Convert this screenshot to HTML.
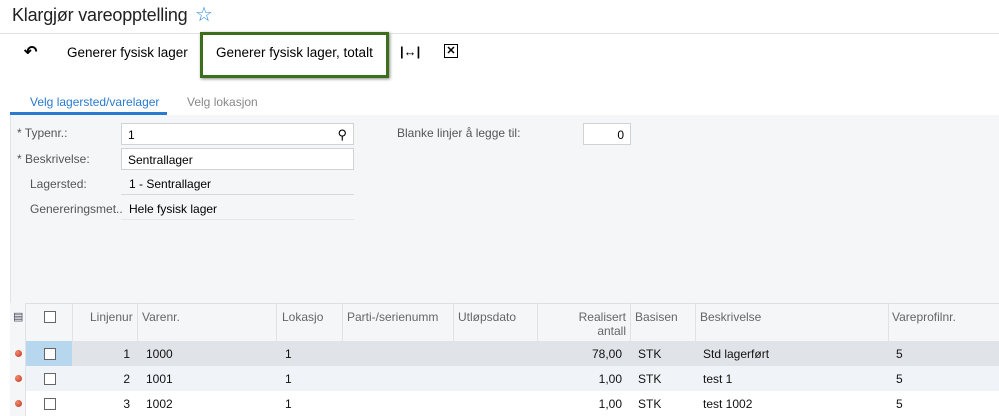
<html><head><style>
body{margin:0;width:999px;height:416px;overflow:hidden;background:#fff;font-family:"Liberation Sans",Arial,sans-serif;position:relative}
div,span{position:absolute}
.t{font-size:13px;color:#000}
.lbl{font-size:12px;color:#555}
.inp{background:#fff;border:1px solid #cfd3d8;height:22px;font-size:12px;line-height:22px;padding-left:6px;box-sizing:border-box}
.h{font-size:12px;color:#666;top:310px;overflow:hidden;white-space:nowrap}
.vl{top:303px;height:38px;width:1px;background:#e0e2e5}
.cell{font-size:12px;color:#111}
.cb{width:10px;height:10px;border:1px solid #666;background:#fff}
.dot{width:7px;height:7px;border-radius:50%;background:radial-gradient(circle at 35% 35%,#f08a70,#c0321a)}
</style></head><body>
<div style="left:12px;top:5px;font-size:18px;color:#222;letter-spacing:-0.2px">Klargjør vareopptelling</div>
<div style="left:195px;top:2px;font-size:20px;color:#2a8ad8">☆</div>
<div style="left:0;top:33px;width:999px;height:1px;background:#e2e2e2"></div>
<div style="left:24px;top:42px;font-size:16px;font-weight:bold">↶</div>
<div class="t" style="left:67px;top:45px;font-size:13.5px">Generer fysisk lager</div>
<div style="left:200px;top:32px;width:183px;height:40px;border:3px solid #3d6e1b;box-shadow:1px 1px 3px #888"></div>
<div class="t" style="left:216px;top:45px;font-size:13.5px">Generer fysisk lager, totalt</div>
<div style="left:400px;top:44px;font-size:13px;font-weight:bold">|↔|</div>
<div style="left:444px;top:44px;width:12px;height:12px;border:1px solid #000;font-size:11px;line-height:12px;text-align:center;font-weight:bold">✕</div>
<div style="left:30px;top:95px;font-size:12px;color:#2a7ad0">Velg lagersted/varelager</div>
<div style="left:187px;top:95px;font-size:12px;color:#888">Velg lokasjon</div>
<div style="left:10px;top:112px;width:157px;height:3px;background:#2a7ad0"></div>
<div style="left:10px;top:115px;width:989px;height:188px;background:#f5f6f8;border-left:1px solid #e0e2e5"></div>
<div class="lbl" style="left:17px;top:126px">* Typenr.:</div>
<div class="inp" style="left:121px;top:123px;width:233px">1<span style="right:6px;top:0;font-size:13px">⚲</span></div>
<div class="lbl" style="left:17px;top:152px">* Beskrivelse:</div>
<div class="inp" style="left:121px;top:148px;width:233px">Sentrallager</div>
<div class="lbl" style="left:30px;top:177px">Lagersted:</div>
<div class="t" style="left:129px;top:177px;font-size:12px">1 - Sentrallager</div>
<div style="left:121px;top:194px;width:233px;height:1px;background:#d5d8dc"></div>
<div class="lbl" style="left:30px;top:202px;width:92px;overflow:hidden;white-space:nowrap">Genereringsmet...</div>
<div class="t" style="left:129px;top:202px;font-size:12px">Hele fysisk lager</div>
<div style="left:121px;top:219px;width:233px;height:1px;background:#e5e7ea"></div>
<div class="lbl" style="left:397px;top:126px">Blanke linjer å legge til:</div>
<div class="inp" style="left:583px;top:123px;width:48px;text-align:right;padding-right:6px">0</div>
<div style="left:10px;top:303px;width:989px;height:38px;background:#f5f6f8;border-top:1px solid #dcdfe3"></div>
<div style="left:10px;top:303px;width:15px;height:113px;background:#f5f6f8;border-right:1px solid #e0e2e5"></div>
<div style="left:13px;top:310px;font-size:11px;color:#445">▤</div>
<div class="cb" style="left:44px;top:311px"></div>
<div class="vl" style="left:72px"></div><div class="vl" style="left:137px"></div><div class="vl" style="left:276px"></div><div class="vl" style="left:342px"></div><div class="vl" style="left:453px"></div><div class="vl" style="left:537px"></div><div class="vl" style="left:630px"></div><div class="vl" style="left:695px"></div><div class="vl" style="left:888px"></div>
<div class="h" style="left:90px;width:45px">Linjenur</div>
<div class="h" style="left:142px">Varenr.</div>
<div class="h" style="left:282px;width:43px">Lokasjo</div>
<div class="h" style="left:347px;width:98px">Parti-/serienumm</div>
<div class="h" style="left:458px">Utløpsdato</div>
<div class="h" style="left:540px;width:86px;text-align:right;line-height:14px;white-space:normal">Realisert<br>antall</div>
<div class="h" style="left:635px">Basisen</div>
<div class="h" style="left:700px">Beskrivelse</div>
<div class="h" style="left:892px">Vareprofilnr.</div>
<div style="left:72px;top:341px;width:927px;height:25px;background:#e0e3e8"></div>
<div style="left:26px;top:341px;width:46px;height:25px;background:#b7d7ef"></div>
<div style="left:26px;top:366px;width:973px;height:25px;background:#f0f4f8"></div>
<div class="dot" style="left:15px;top:350px"></div><div class="dot" style="left:15px;top:375px"></div><div class="dot" style="left:15px;top:400px"></div>
<div class="cb" style="left:44px;top:348px"></div><div class="cb" style="left:44px;top:373px"></div><div class="cb" style="left:44px;top:398px"></div>
<div class="cell" style="left:90px;top:347px;width:40px;text-align:right">1</div>
<div class="cell" style="left:90px;top:372px;width:40px;text-align:right">2</div>
<div class="cell" style="left:90px;top:397px;width:40px;text-align:right">3</div>
<div class="cell" style="left:146px;top:347px">1000</div><div class="cell" style="left:146px;top:372px">1001</div><div class="cell" style="left:146px;top:397px">1002</div>
<div class="cell" style="left:285px;top:347px">1</div><div class="cell" style="left:285px;top:372px">1</div><div class="cell" style="left:285px;top:397px">1</div>
<div class="cell" style="left:560px;top:347px;width:62px;text-align:right">78,00</div>
<div class="cell" style="left:560px;top:372px;width:62px;text-align:right">1,00</div>
<div class="cell" style="left:560px;top:397px;width:62px;text-align:right">1,00</div>
<div class="cell" style="left:638px;top:347px">STK</div><div class="cell" style="left:638px;top:372px">STK</div><div class="cell" style="left:638px;top:397px">STK</div>
<div class="cell" style="left:703px;top:347px">Std lagerført</div><div class="cell" style="left:703px;top:372px">test 1</div><div class="cell" style="left:703px;top:397px">test 1002</div>
<div class="cell" style="left:896px;top:347px">5</div><div class="cell" style="left:896px;top:372px">5</div><div class="cell" style="left:896px;top:397px">5</div>
</body></html>
